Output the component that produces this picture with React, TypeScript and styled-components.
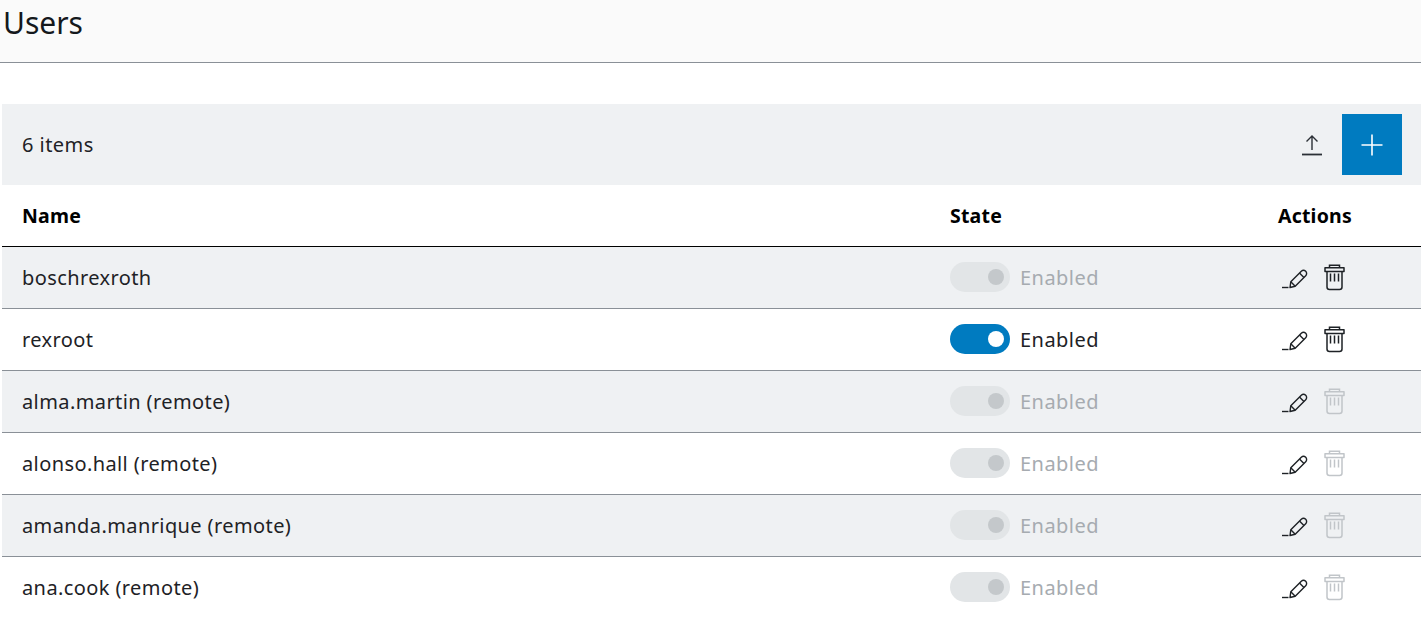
import React, { FunctionComponent } from "react";
import styled, { createGlobalStyle } from "styled-components";

const GlobalStyle = createGlobalStyle`
  html, body {
    margin: 0;
    padding: 0;
    background: #fff;
    overflow: hidden;
  }
  body {
    font-family: "Noto Sans", "Open Sans", sans-serif;
    color: #000;
  }
`;

const Page = styled.div`
  width: 1421px;
  height: 617px;
  overflow: hidden;
`;

const Header = styled.header`
  height: 62px;
  background: #fafafa;
  border-bottom: 1px solid #8a9097;
  padding-left: 3px;
`;

const Title = styled.h1`
  margin: 0;
  font-size: 30px;
  font-weight: 400;
  line-height: 46px;
  color: #14181c;
`;

const Content = styled.main`
  margin: 41px 0 0 2px;
`;

const Toolbar = styled.div`
  height: 81px;
  background: #eff1f3;
  display: flex;
  align-items: center;
  justify-content: space-between;
  padding: 0 19px 0 20px;
`;

const Count = styled.span`
  font-size: 20px;
  letter-spacing: 0.45px;
  color: #1e2226;
`;

const ToolbarActions = styled.div`
  display: flex;
  align-items: center;
  gap: 19px;
`;

const IconButton = styled.button`
  border: 0;
  background: none;
  padding: 0;
  display: flex;
  color: #2b3036;
`;

const AddButton = styled.button`
  width: 60px;
  height: 61px;
  border: 0;
  padding: 0;
  background: #007bc0;
  color: #fff;
  display: flex;
  align-items: center;
  justify-content: center;
`;

const Row = styled.div<{ $shaded?: boolean }>`
  display: grid;
  grid-template-columns: 928px 328px 1fr;
  align-items: center;
  height: 61px;
  padding-left: 20px;
  background: ${(p) => (p.$shaded ? "#eff1f3" : "#fff")};
  border-bottom: 1px solid #8a9097;
`;

const HeadRow = styled(Row)`
  border-bottom-color: #000;
`;

const HeadCell = styled.span`
  font-size: 19.5px;
  font-weight: 700;
  letter-spacing: 0.2px;
  color: #000;
`;

const NameCell = styled.span`
  font-size: 20px;
  letter-spacing: 0.4px;
  color: #1e2226;
`;

const StateCell = styled.div`
  display: flex;
  align-items: center;
  gap: 10px;
`;

const Track = styled.span<{ $disabled: boolean }>`
  position: relative;
  width: 60px;
  height: 30px;
  margin-top: -1px;
  border-radius: 15px;
  background: ${(p) => (p.$disabled ? "#e2e5e7" : "#007bc0")};
`;

const Knob = styled.span<{ $disabled: boolean }>`
  position: absolute;
  top: 7px;
  right: 6px;
  width: 16px;
  height: 16px;
  border-radius: 50%;
  background: ${(p) => (p.$disabled ? "#c4c8cb" : "#fff")};
`;

const StateLabel = styled.span<{ $disabled: boolean }>`
  font-size: 20px;
  letter-spacing: 0.45px;
  color: ${(p) => (p.$disabled ? "#a6abb0" : "#1e2226")};
`;

const ActionCell = styled.div`
  display: flex;
  align-items: center;
  gap: 15px;
  padding-left: 2px;
`;

const ActionIcon = styled.span<{ $disabled?: boolean }>`
  display: flex;
  color: ${(p) => (p.$disabled ? "#c1c5c9" : "#1e2226")};
`;

const UploadIcon = () => (
  <svg width="22" height="24" viewBox="0 0 22 24" fill="none" stroke="currentColor" strokeWidth="1.4">
    <path d="M11 17V3M5.500 8.500 11 3l5.500 5.500" />
    <path d="M1 21.500h20" strokeWidth="1.800" />
  </svg>
);

const PlusIcon = () => (
  <svg width="22" height="22" viewBox="0 0 22 22" fill="none" stroke="currentColor" strokeWidth="1.6">
    <path d="M11 0.500v21M0.500 11h21" />
  </svg>
);

const EditIcon = () => (
  <svg width="28" height="26" viewBox="0 1 28 26" fill="none" stroke="currentColor" strokeWidth="1.4">
    <path d="M2 23.500h6.500" />
    <path d="M10 23.500 10.800 17.800 21.300 7.300a3.100 3.100 0 0 1 4.400 4.400L15.200 22.200Z" strokeLinejoin="round" />
    <path d="M10.800 17.800l4.400 4.400" />
    <path d="M19.500 9.100l4.400 4.400" />
  </svg>
);

const TrashIcon = () => (
  <svg width="23" height="27" viewBox="0 0 23 27" fill="none" stroke="currentColor" strokeWidth="1.5">
    <path d="M6.500 3.800V1.200h10v2.600" />
    <path d="M2 3.800h19v3.700H2z" strokeLinejoin="round" />
    <path d="M4 7.500V23a2.500 2.500 0 0 0 2.500 2.500h10A2.500 2.500 0 0 0 19 23V7.500" />
    <path d="M7.500 9.500v8M11.500 9.500v8M15.500 9.500v8" />
  </svg>
);

type User = {
  name: string;
  active?: boolean;
  canDelete?: boolean;
};

const users: User[] = [
  { name: "boschrexroth", canDelete: true },
  { name: "rexroot", active: true, canDelete: true },
  { name: "alma.martin (remote)" },
  { name: "alonso.hall (remote)" },
  { name: "amanda.manrique (remote)" },
  { name: "ana.cook (remote)" },
];

const App: FunctionComponent = () => {
  return (
    <Page>
      <GlobalStyle />
      <Header>
        <Title>Users</Title>
      </Header>
      <Content>
        <Toolbar>
          <Count>6 items</Count>
          <ToolbarActions>
            <IconButton aria-label="upload">
              <UploadIcon />
            </IconButton>
            <AddButton aria-label="add">
              <PlusIcon />
            </AddButton>
          </ToolbarActions>
        </Toolbar>
        <HeadRow>
          <HeadCell>Name</HeadCell>
          <HeadCell>State</HeadCell>
          <HeadCell>Actions</HeadCell>
        </HeadRow>
        {users.map((user, i) => (
          <Row key={user.name} $shaded={i % 2 === 0}>
            <NameCell>{user.name}</NameCell>
            <StateCell>
              <Track $disabled={!user.active}>
                <Knob $disabled={!user.active} />
              </Track>
              <StateLabel $disabled={!user.active}>Enabled</StateLabel>
            </StateCell>
            <ActionCell>
              <ActionIcon>
                <EditIcon />
              </ActionIcon>
              <ActionIcon $disabled={!user.canDelete}>
                <TrashIcon />
              </ActionIcon>
            </ActionCell>
          </Row>
        ))}
      </Content>
    </Page>
  );
};

export default App;
